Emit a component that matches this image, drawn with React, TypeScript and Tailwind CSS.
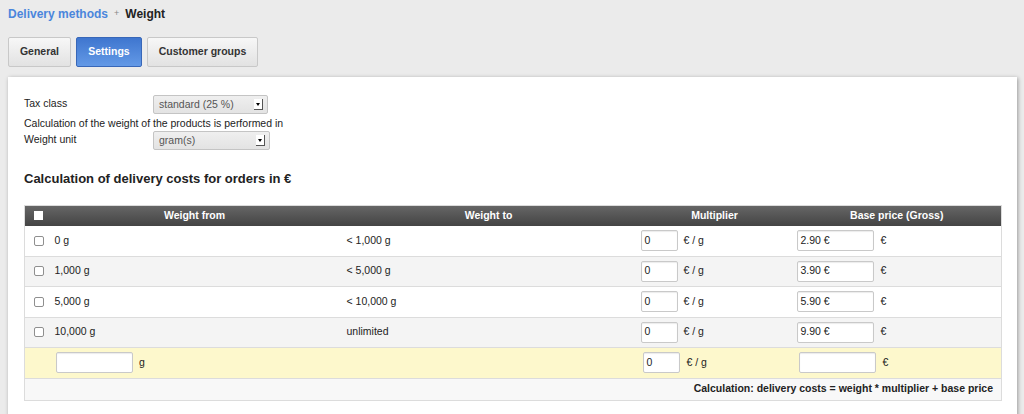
import React from "react";

const rows = [
  { from: "0 g", to: "< 1,000 g", mult: "0", base: "2.90 €" },
  { from: "1,000 g", to: "< 5,000 g", mult: "0", base: "3.90 €" },
  { from: "5,000 g", to: "< 10,000 g", mult: "0", base: "5.90 €" },
  { from: "10,000 g", to: "unlimited", mult: "0", base: "9.90 €" },
];

function FakeSelect({ value, width }: { value: string; width: string }) {
  return (
    <div
      className={`${width} h-[19px] flex items-center justify-between pl-[5px] pr-[4px] border border-[#c4c4c4] rounded-[2px] bg-gradient-to-b from-[#efefef] to-[#e3e3e3] text-[#555]`}
    >
      <span>{value}</span>
      <span className="w-[9px] h-[11px] bg-white border-r border-b border-[#555] flex items-center justify-center">
        <span className="block w-0 h-0 border-l-[2.5px] border-r-[2.5px] border-t-[3px] border-l-transparent border-r-transparent border-t-black" />
      </span>
    </div>
  );
}

function Box({ value, width }: { value: string; width: string }) {
  return (
    <div
      className={`${width} h-[21px] flex items-center px-[3px] bg-white border border-[#c9c9c9] rounded-[2px] shadow-[inset_0_1px_1px_rgba(0,0,0,0.08)]`}
    >
      {value}
    </div>
  );
}

function Check() {
  return <span className="block w-[10px] h-[10px] rounded-[2px] border border-[#8f8f8f] bg-white" />;
}

export default function App() {
  return (
    <div
      className="w-[1024px] h-[414px] overflow-hidden bg-[#ebebeb] text-[10.5px] text-[#222]"
      style={{ fontFamily: '"Liberation Sans", Arial, sans-serif' }}
    >
      <div className="px-[8px] pt-[5px]">
        <div className="flex items-center h-[17px] text-[12px] font-bold">
          <span className="text-[#4a86dc]">Delivery methods</span>
          <span className="mx-[6px] text-[9px] text-[#888] font-normal">+</span>
          <span className="text-[#222]">Weight</span>
        </div>

        <div className="flex gap-[5px] mt-[15px]">
          <div className="w-[63px] h-[30px] flex items-center justify-center rounded-[2px] border border-[#c8c8c8] bg-gradient-to-b from-[#f7f7f7] to-[#e2e2e2] font-bold text-[#333]">
            General
          </div>
          <div className="w-[66px] h-[30px] flex items-center justify-center rounded-[2px] border border-[#3867b8] bg-gradient-to-b from-[#3f76cf] to-[#6399e6] font-bold text-white">
            Settings
          </div>
          <div className="w-[111px] h-[30px] flex items-center justify-center rounded-[2px] border border-[#c8c8c8] bg-gradient-to-b from-[#f7f7f7] to-[#e2e2e2] font-bold text-[#333]">
            Customer groups
          </div>
        </div>

        <div className="mt-[10px] w-[1009px] h-[340px] bg-white shadow-[1px_1px_4px_rgba(0,0,0,0.35)] px-[16px] pt-[18px]">
          <div className="flex items-start">
            <div className="w-[129px] pt-[1px]">Tax class</div>
            <FakeSelect value="standard (25 %)" width="w-[115px]" />
          </div>
          <div className="mt-[2px] leading-[15px]">Calculation of the weight of the products is performed in</div>
          <div className="flex items-start">
            <div className="w-[129px] pt-[1px]">Weight unit</div>
            <FakeSelect value="gram(s)" width="w-[117px]" />
          </div>

          <h2 className="mt-[20px] text-[13px] font-bold text-[#222] leading-[18px]">
            Calculation of delivery costs for orders in €
          </h2>

          <table className="mt-[17px] w-[977px] border-collapse table-fixed border border-[#dcdcdc]">
            <colgroup>
              <col className="w-[24px]" />
              <col className="w-[292px]" />
              <col className="w-[296px]" />
              <col className="w-[156px]" />
              <col className="w-[209px]" />
            </colgroup>
            <thead>
              <tr className="h-[20px] bg-gradient-to-b from-[#666] to-[#444] text-white font-bold">
                <th className="pl-[9px]">
                  <span className="block w-[9px] h-[9px] bg-white" />
                </th>
                <th className="font-bold">Weight from</th>
                <th className="font-bold">Weight to</th>
                <th className="font-bold">Multiplier</th>
                <th className="font-bold">Base price (Gross)</th>
              </tr>
            </thead>
            <tbody>
              {rows.map((r, i) => (
                <tr
                  key={r.from}
                  className={`h-[30.5px] border-b border-[#dcdcdc] ${i % 2 ? "bg-[#f4f4f4]" : "bg-white"}`}
                >
                  <td className="pl-[9px]">
                    <Check />
                  </td>
                  <td className="pl-[6px]">{r.from}</td>
                  <td className="pl-[6px]">{r.to}</td>
                  <td className="pl-[4px]">
                    <div className="flex items-center gap-[6px]">
                      <Box value={r.mult} width="w-[37px]" />
                      <span>€ / g</span>
                    </div>
                  </td>
                  <td className="pl-[4px]">
                    <div className="flex items-center gap-[7px]">
                      <Box value={r.base} width="w-[77px]" />
                      <span>€</span>
                    </div>
                  </td>
                </tr>
              ))}
              <tr className="h-[30.5px] border-b border-[#dcdcdc] bg-[#fdf8cc]">
                <td colSpan={2} className="pl-[31px]">
                  <div className="flex items-center gap-[6px]">
                    <Box value="" width="w-[77px]" />
                    <span>g</span>
                  </div>
                </td>
                <td />
                <td className="pl-[6px]">
                  <div className="flex items-center gap-[7px]">
                    <Box value="0" width="w-[37px]" />
                    <span>€ / g</span>
                  </div>
                </td>
                <td className="pl-[6px]">
                  <div className="flex items-center gap-[7px]">
                    <Box value="" width="w-[77px]" />
                    <span>€</span>
                  </div>
                </td>
              </tr>
              <tr className="h-[22px] bg-[#f8f8f8]">
                <td colSpan={5} className="text-right pr-[8px] font-bold">
                  Calculation: delivery costs = weight * multiplier + base price
                </td>
              </tr>
            </tbody>
          </table>
        </div>
      </div>
    </div>
  );
}
